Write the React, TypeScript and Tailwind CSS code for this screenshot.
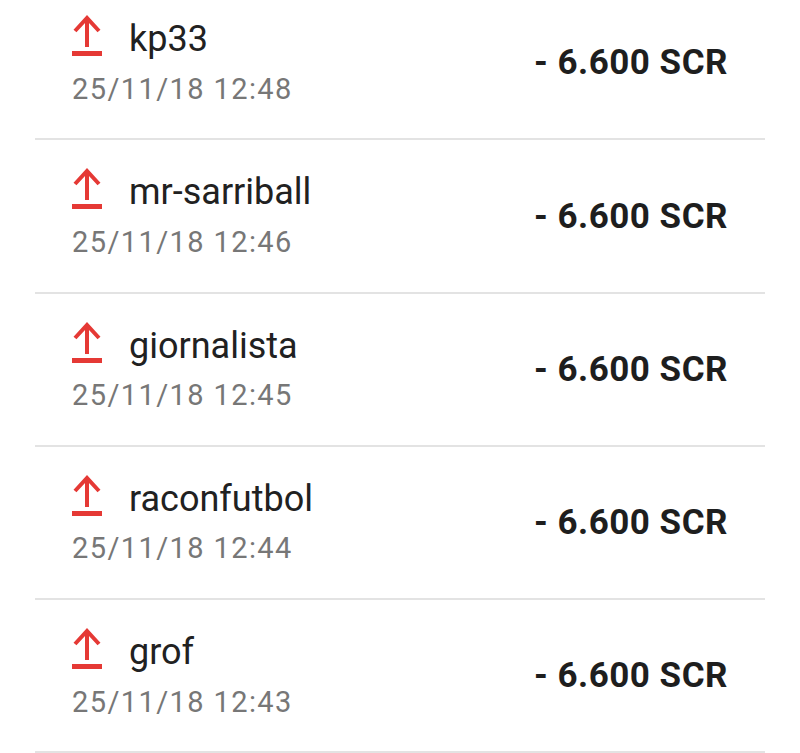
const ROWS = [
  { name: 'kp33', date: '25/11/18 12:48', amount: '- 6.600 SCR' },
  { name: 'mr-sarriball', date: '25/11/18 12:46', amount: '- 6.600 SCR' },
  { name: 'giornalista', date: '25/11/18 12:45', amount: '- 6.600 SCR' },
  { name: 'raconfutbol', date: '25/11/18 12:44', amount: '- 6.600 SCR' },
  { name: 'grof', date: '25/11/18 12:43', amount: '- 6.600 SCR' },
];

const UploadIcon = () => (
  <svg width="30" height="41" viewBox="0 0 30 41" fill="none" className="-mt-[10px] shrink-0">
    <path d="M15 3 V32" stroke="#e53935" strokeWidth="4" />
    <path d="M3 16 L15 3 L27 16" stroke="#e53935" strokeWidth="4" strokeLinejoin="miter" />
    <rect x="0" y="36" width="30" height="5" fill="#e53935" />
  </svg>
);

const App = () => {
  return (
    <div
      className="w-[800px] h-[753px] overflow-hidden bg-white"
      style={{ fontFamily: 'Roboto, "Noto Sans", sans-serif' }}
    >
      <div className="mx-[35px] -mt-[13px]">
        {ROWS.map((row) => (
          <div
            key={row.date}
            className="h-[153.25px] border-b-2 border-[#e3e3e3] flex items-center justify-between pl-[37px] pr-[37px]"
          >
            <div className="flex flex-col">
              <div className="flex items-center gap-[27px] h-[48px]">
                <UploadIcon />
                <span className="text-[36px] leading-[48px] text-[#212121] -mt-[3px]">
                  {row.name}
                </span>
              </div>
              <span className="mt-1 text-[29px] leading-[40px] tracking-[1.4px] text-[#777777]">
                {row.date}
              </span>
            </div>
            <span className="text-[35px] font-bold tracking-[0.5px] text-[#1e1e1e] mt-[2px]">
              {row.amount}
            </span>
          </div>
        ))}
      </div>
    </div>
  );
};

export default App;
